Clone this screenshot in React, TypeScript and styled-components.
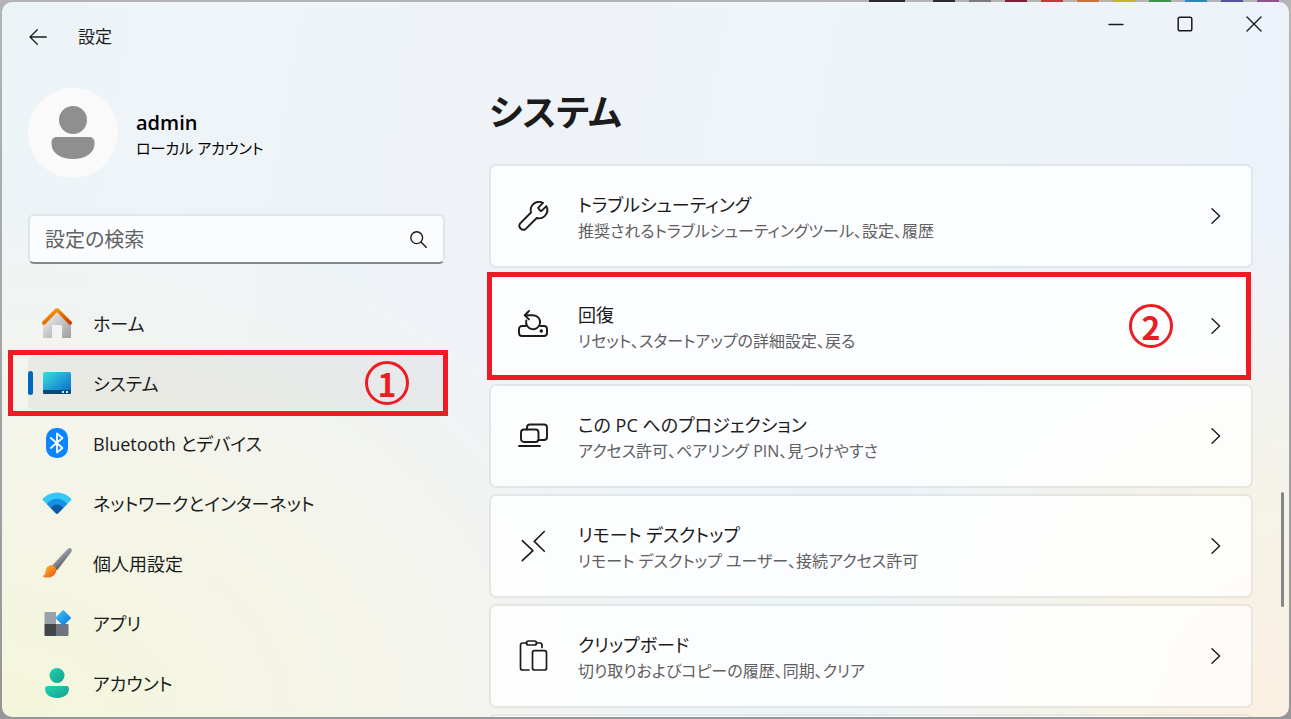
import React from "react";
import styled, { createGlobalStyle } from "styled-components";

const GlobalStyle = createGlobalStyle`
  * { box-sizing: border-box; }
  body {
    margin: 0;
    background: #a8a8aa;
    color: #1b1b1b;
    font-family: "Open Sans", "Noto Sans CJK JP", sans-serif;
    font-feature-settings: "palt";
  }
  button, input { font: inherit; font-feature-settings: inherit; color: inherit; }
  button { border: 0; padding: 0; background: none; }
  h1, h2, p, ul { margin: 0; padding: 0; }
  ul { list-style: none; }
`;

const Desktop = styled.div`
  height: 100vh;
  display: flex;
  flex-direction: column;
  padding: 0 2px 2px;
  background: linear-gradient(#b4b4b4, #a5a5a8 50%, #969698);
`;

const Swatches = styled.div`
  height: 2px;
  flex: none;
  display: flex;
  justify-content: flex-end;
  gap: 14px;
  padding-right: 10px;
`;

const Swatch = styled.span<{ $color: string }>`
  width: 22px;
  background: ${(p) => p.$color};
`;

const CurrentSwatch = styled(Swatch)`
  width: 36px;
  margin-right: 14px;
`;

const Window = styled.div`
  position: relative;
  flex: 1;
  min-height: 0;
  display: flex;
  flex-direction: column;
  overflow: hidden;
  border-radius: 10px;
  background:
    radial-gradient(ellipse 54% 72% at 0% 100%, #f4f6da, rgba(245, 244, 232, 0.85) 55%, rgba(243, 244, 242, 0) 100%),
    radial-gradient(ellipse 34% 68% at 100% 100%, #fbf0e2, rgba(246, 243, 230, 0.9) 45%, rgba(240, 244, 244, 0) 100%),
    linear-gradient(100deg, #edf4f7, #eff3f8 40%, #edf4f7 65%, #edf2fb);
`;

const TitleBar = styled.header`
  flex: none;
  height: 70px;
  display: flex;
  align-items: flex-start;
  justify-content: space-between;
`;

const TitleGroup = styled.div`
  display: flex;
  align-items: center;
  gap: 23px;
  height: 70px;
  padding-left: 19px;
  font-size: 17px;
  line-height: 24px;
`;

const BackButton = styled.button`
  width: 34px;
  height: 34px;
  display: grid;
  place-items: center;
`;

const WindowButtons = styled.div`
  display: flex;
  padding-right: 1px;
`;

const WindowButton = styled.button`
  width: 69px;
  height: 44px;
  display: grid;
  place-items: center;
`;

const Body = styled.div`
  flex: 1;
  min-height: 0;
  display: flex;
  gap: 44px;
  padding: 0 36px 0 26px;
`;

const Sidebar = styled.aside`
  flex: none;
  width: 417px;
  padding-top: 16px;
`;

const Profile = styled.div`
  display: flex;
  align-items: center;
  gap: 18px;
  height: 90px;
  margin-bottom: 36px;
`;

const ProfileText = styled.div`
  padding-top: 4px;
`;

const UserName = styled.h2`
  font-size: 20px;
  line-height: 26px;
  font-weight: 600;
  color: #000;
`;

const AccountType = styled.p`
  font-size: 15px;
  line-height: 24px;
  color: #000;
`;

const SearchBox = styled.label`
  display: flex;
  align-items: center;
  height: 50px;
  margin-bottom: 32px;
  padding: 0 16px 0 15px;
  border: 2px solid #e0e5ea;
  border-bottom-color: #868789;
  border-radius: 6px;
  background: #fbfcfe;
`;

const SearchInput = styled.input`
  flex: 1;
  min-width: 0;
  border: 0;
  outline: 0;
  padding: 0;
  background: none;
  font-size: 20px;
  &::placeholder { color: #616264; opacity: 1; }
`;

const NavList = styled.ul`
  display: flex;
  flex-direction: column;
  gap: 6px;
`;

const Item = styled.li`
  position: relative;
`;

const NavLink = styled.a<{ $active?: boolean }>`
  display: flex;
  align-items: center;
  height: 54px;
  border-radius: 6px;
  color: inherit;
  text-decoration: none;
  font-size: 18px;
  background: ${(p) => (p.$active ? "rgba(0, 0, 0, 0.04)" : "transparent")};
  &::before {
    content: "";
    width: 5px;
    height: 24px;
    border-radius: 3px;
    background: ${(p) => (p.$active ? "#0067c0" : "transparent")};
  }
`;

const NavIcon = styled.span`
  width: 48px;
  margin-right: 12px;
  display: grid;
  place-items: center;
`;

const Main = styled.main`
  flex: 1;
  min-width: 0;
`;

const PageTitle = styled.h1`
  height: 92px;
  padding-top: 14px;
  font-size: 36px;
  line-height: 54px;
  font-weight: 700;
`;

const CardList = styled.ul`
  display: flex;
  flex-direction: column;
  gap: 6px;
`;

const Card = styled.button`
  width: 100%;
  height: 104px;
  display: flex;
  align-items: center;
  padding: 0 30px 0 27px;
  border: 2px solid rgba(0, 0, 0, 0.05);
  border-radius: 7px;
  background: rgba(255, 255, 255, 0.8);
  background-clip: padding-box;
  text-align: left;
`;

const CardIcon = styled.span`
  width: 30px;
  height: 30px;
  margin-right: 30px;
`;

const CardText = styled.span`
  flex: 1;
  display: flex;
  flex-direction: column;
  padding-top: 4px;
`;

const CardTitle = styled.span`
  font-size: 18px;
  line-height: 26px;
`;

const CardNote = styled.span`
  font-size: 16px;
  line-height: 26px;
  color: #5f6062;
`;

const Highlight = styled.div<{ $inset: string; $pad: number }>`
  position: absolute;
  inset: ${(p) => p.$inset};
  z-index: 1;
  display: flex;
  align-items: center;
  justify-content: flex-end;
  padding-right: ${(p) => p.$pad}px;
  border: 5px solid #ed1c24;
  pointer-events: none;
`;

const StepNumber = styled.span`
  width: 44px;
  height: 44px;
  display: grid;
  place-items: center;
  border: 3px solid #ed1c24;
  border-radius: 50%;
  color: #ed1c24;
  font-family: "Noto Sans CJK JP", sans-serif;
  font-size: 32px;
  line-height: 36px;
  font-weight: 700;
`;

const ScrollThumb = styled.div`
  position: absolute;
  top: 490px;
  right: 5px;
  width: 3px;
  height: 115px;
  border-radius: 2px;
  background: #868783;
`;

const lineProps = {
  fill: "none",
  stroke: "#1b1b1b",
  strokeLinecap: "round" as const,
  strokeLinejoin: "round" as const,
};

const BackArrow = () => (
  <svg width="18" height="16" viewBox="0 0 18 16" {...lineProps} strokeWidth="1.3">
    <path d="M17.3 8H1M8.3.8 1 8l7.3 7.2" />
  </svg>
);

const SearchIcon = () => (
  <svg width="17" height="17" viewBox="0 0 17 17" {...lineProps} strokeWidth="1.4">
    <circle cx="6.7" cy="6.7" r="5.9" />
    <path d="m11 11 5.2 5.2" />
  </svg>
);

const Chevron = () => (
  <svg width="10" height="16" viewBox="0 0 10 16" {...lineProps} strokeWidth="1.4">
    <path d="m1 .8 7.6 7.2L1 15.2" />
  </svg>
);

const Avatar = () => (
  <svg width="90" height="90" viewBox="0 0 90 90">
    <circle cx="45" cy="45" r="45" fill="#fafafa" />
    <circle cx="45" cy="32" r="14" fill="#8f8f8f" />
    <path d="M28.5 49h33a5 5 0 0 1 5 5v2c0 9-9.5 15-21.5 15s-21.5-6-21.5-15v-2a5 5 0 0 1 5-5Z" fill="#8f8f8f" />
  </svg>
);

const HomeIcon = () => (
  <svg width="30" height="30" viewBox="0 0 30 30">
    <defs>
      <linearGradient id="homeWall" x1="0" y1="0" x2="1" y2="1">
        <stop offset="0.2" stopColor="#e4e4e4" />
        <stop offset="1" stopColor="#9c9c9c" />
      </linearGradient>
      <linearGradient id="homeRoof" x1="0" y1="0" x2="1" y2="1">
        <stop offset="0" stopColor="#ffa800" />
        <stop offset="1" stopColor="#cb3d00" />
      </linearGradient>
    </defs>
    <path d="M15 3.5 29 16v13a1 1 0 0 1-1 1h-8V18a1 1 0 0 0-1-1h-8a1 1 0 0 0-1 1v12H2a1 1 0 0 1-1-1V16Z" fill="url(#homeWall)" />
    <path d="M1.9 14.9 13.6 3a2 2 0 0 1 2.8 0l11.7 11.9" fill="none" stroke="url(#homeRoof)" strokeWidth="3.7" strokeLinecap="round" />
  </svg>
);

const SystemIcon = () => (
  <svg width="28" height="22" viewBox="0 0 28 22">
    <defs>
      <linearGradient id="screen" x1="0" y1="0" x2="1" y2="1">
        <stop offset="0" stopColor="#37e0e0" />
        <stop offset="1" stopColor="#0a64c8" />
      </linearGradient>
    </defs>
    <rect width="28" height="22" rx="1.6" fill="url(#screen)" />
    <path d="M0 18h28v2.400a1.600 1.600 0 0 1-1.600 1.600H1.600A1.600 1.600 0 0 1 0 20.400Z" fill="#0b4a70" />
    <path d="M19 19h2v2h-2zM23 19h2v2h-2z" fill="#d6eef8" />
  </svg>
);

const BluetoothIcon = () => (
  <svg width="22" height="30" viewBox="0 0 22 30">
    <rect width="22" height="30" rx="10" fill="#0a84ff" />
    <path d="m4.8 10 11.700 10L11 24.500v-19l5.500 4.500L4.800 20" fill="none" stroke="#fff" strokeWidth="1.8" strokeLinejoin="round" strokeLinecap="round" />
  </svg>
);

const NetworkIcon = () => (
  <svg width="30" height="22" viewBox="0 0 30 22">
    <path d="M.9 6.4C8.5-1.6 21.5-1.6 29.100 6.400c.5.500.5 1 .1 1.500L15.900 21.400a1.300 1.300 0 0 1-1.800 0L.8 7.900c-.4-.5-.4-1 .1-1.500Z" fill="#35c8f7" />
    <path d="M4.700 11.900c5.600-7 15-7 20.600 0l-9.400 9.500a1.300 1.300 0 0 1-1.800 0Z" fill="#1591e6" />
    <path d="M8.800 16c3.400-4.800 9-4.800 12.400 0l-5.300 5.400a1.300 1.300 0 0 1-1.800 0Z" fill="#0c59a4" />
  </svg>
);

const BrushIcon = () => (
  <svg width="30" height="30" viewBox="0 0 30 30">
    <defs>
      <linearGradient id="handle" x1="0.4" y1="0.2" x2="0.7" y2="0.6">
        <stop offset="0" stopColor="#b0b5ba" />
        <stop offset="1" stopColor="#5f656c" />
      </linearGradient>
      <linearGradient id="bristle" x1="0" y1="0" x2="1" y2="1">
        <stop offset="0" stopColor="#ffc024" />
        <stop offset="1" stopColor="#e8501c" />
      </linearGradient>
    </defs>
    <path d="M10 17.500 25.300 1.200c1.200-1.200 3-1.400 3.800-.6.800.9.700 2.400-.1 3.700L15 22.500Z" fill="url(#handle)" />
    <path d="M9.500 17.200c3.200.2 5 2.500 4.700 5.600C13.700 27.600 9 29.800 5 29.600c-2 0-3.700-.6-4.600-1.600 2.600-.8 2.900-2.700 3.300-5.100.5-3.600 2.600-5.900 5.800-5.700Z" fill="url(#bristle)" />
  </svg>
);

const AppsIcon = () => (
  <svg width="27" height="26" viewBox="0 0 27 26">
    <defs>
      <linearGradient id="tile" x1="0" y1="0" x2="1" y2="1">
        <stop offset="0" stopColor="#3fc9fb" />
        <stop offset="1" stopColor="#0b71d8" />
      </linearGradient>
    </defs>
    <path d="M1.500 2H12v12H.5V3a1 1 0 0 1 1-1Z" fill="#9ba1aa" />
    <path d="M.5 14H12v12H1.500a1 1 0 0 1-1-1Z" fill="#414549" />
    <path d="M12 14h11.500a1 1 0 0 1 1 1v10a1 1 0 0 1-1 1H12Z" fill="#6f757e" />
    <path d="M18.500.5a1 1 0 0 1 1.400 0l6.700 6.700a1 1 0 0 1 0 1.400l-6.700 6.700a1 1 0 0 1-1.400 0l-6.700-6.700a1 1 0 0 1 0-1.400Z" fill="url(#tile)" />
  </svg>
);

const AccountIcon = () => (
  <svg width="24" height="30" viewBox="0 0 24 30">
    <defs>
      <linearGradient id="person" x1="0" y1="0" x2="1" y2="1">
        <stop offset="0" stopColor="#24d2b4" />
        <stop offset="1" stopColor="#13a089" />
      </linearGradient>
    </defs>
    <circle cx="12" cy="7.5" r="7.5" fill="url(#person)" />
    <path d="M2.500 18h19A2.500 2.500 0 0 1 24 20.500c0 6-5 9.500-12 9.500S0 26.500 0 20.500A2.500 2.500 0 0 1 2.500 18Z" fill="url(#person)" />
  </svg>
);

const LineIcon = ({ children }: { children: React.ReactNode }) => (
  <svg width="30" height="30" viewBox="0 0 30 30" overflow="visible" {...lineProps} strokeWidth="1.9">
    {children}
  </svg>
);

const WrenchIcon = () => (
  <LineIcon>
    <path d="M25 1.900C21.500.2 17.300.8 14.800 3.600c-2 2.300-2.600 5-1.800 7.900L2.200 22.300a4 4 0 0 0 5.600 5.600L18.700 17c2.900.8 5.800.2 8-1.900 2.600-2.600 3.300-6.600 1.700-9.900l-4.500 4.500a1 1 0 0 1-1.400 0l-2-2a1 1 0 0 1 0-1.400Z" />
  </LineIcon>
);

const RecoveryIcon = () => (
  <LineIcon>
    <path d="M11 0 6.700 4.200 11 8.400M6.700 4.200H15a7 7 0 1 1-6.700 5.200M7.500 15H4a3 3 0 0 0-3 3v4a3 3 0 0 0 3 3h22a3 3 0 0 0 3-3v-4a3 3 0 0 0-3-3h-3.500" />
    <circle cx="23.3" cy="20" r="0.8" fill="#1b1b1b" />
  </LineIcon>
);

const ProjectIcon = () => (
  <LineIcon>
    <path d="M9 8.500V6.500a3 3 0 0 1 3-3h14a3 3 0 0 1 3 3V16a3 3 0 0 1-3 3h-5.500M1 25h21" />
    <rect x="3" y="8.5" width="17.5" height="12.5" rx="3" />
  </LineIcon>
);

const RemoteIcon = () => (
  <LineIcon>
    <path d="m4.300 9.700 10.600 10-10.600 10M26.300.5l-10 9.900 10 9.900" strokeWidth="1.6" />
  </LineIcon>
);

const ClipboardIcon = () => (
  <LineIcon>
    <path d="M8.500 2h-4a2 2 0 0 0-2 2v23a2 2 0 0 0 2 2H11M18.500 2H22a2 2 0 0 1 2 2v2.500" strokeWidth="1.7" />
    <rect x="8.5" y="0" width="10" height="4" rx="2" strokeWidth="1.7" />
    <rect x="14.5" y="9.7" width="14" height="19.300" rx="2" strokeWidth="1.7" />
  </LineIcon>
);

const swatches = ["#2b2b2b", "#7c7c7c", "#7d2236", "#c63a40", "#c7733f", "#c1b32c", "#3f9450", "#3089b0", "#5252a0", "#8b528f"];

const navItems = [
  { label: "ホーム", icon: <HomeIcon /> },
  { label: "システム", icon: <SystemIcon />, step: "1" },
  { label: "Bluetooth とデバイス", icon: <BluetoothIcon /> },
  { label: "ネットワークとインターネット", icon: <NetworkIcon /> },
  { label: "個人用設定", icon: <BrushIcon /> },
  { label: "アプリ", icon: <AppsIcon /> },
  { label: "アカウント", icon: <AccountIcon /> },
];

const cards = [
  { title: "トラブルシューティング", note: "推奨されるトラブルシューティングツール、設定、履歴", icon: <WrenchIcon /> },
  { title: "回復", note: "リセット、スタートアップの詳細設定、戻る", icon: <RecoveryIcon />, step: "2" },
  { title: "この PC へのプロジェクション", note: "アクセス許可、ペアリング PIN、見つけやすさ", icon: <ProjectIcon /> },
  { title: "リモート デスクトップ", note: "リモート デスクトップ ユーザー、接続アクセス許可", icon: <RemoteIcon /> },
  { title: "クリップボード", note: "切り取りおよびコピーの履歴、同期、クリア", icon: <ClipboardIcon /> },
];

export default function App() {
  return (
    <Desktop lang="ja">
      <GlobalStyle />
      <Swatches>
        <CurrentSwatch $color="#2b2b2b" />
        {swatches.map((c) => (
          <Swatch key={c} $color={c} />
        ))}
      </Swatches>
      <Window>
        <TitleBar>
          <TitleGroup>
            <BackButton aria-label="戻る">
              <BackArrow />
            </BackButton>
            <span>設定</span>
          </TitleGroup>
          <WindowButtons>
            <WindowButton aria-label="最小化">
              <svg width="16" height="16" viewBox="0 0 16 16" {...lineProps} strokeWidth="1.4">
                <path d="M1 8.500h14" />
              </svg>
            </WindowButton>
            <WindowButton aria-label="最大化">
              <svg width="16" height="16" viewBox="0 0 16 16" {...lineProps} strokeWidth="1.5">
                <rect x="1.2" y="1.2" width="13.6" height="13.6" rx="1.8" />
              </svg>
            </WindowButton>
            <WindowButton aria-label="閉じる">
              <svg width="16" height="16" viewBox="0 0 16 16" {...lineProps} strokeWidth="1.4">
                <path d="m1 1 14 14M15 1 1 15" />
              </svg>
            </WindowButton>
          </WindowButtons>
        </TitleBar>
        <Body>
          <Sidebar>
            <Profile>
              <Avatar />
              <ProfileText>
                <UserName>admin</UserName>
                <AccountType>ローカル アカウント</AccountType>
              </ProfileText>
            </Profile>
            <SearchBox>
              <SearchInput type="text" aria-label="設定の検索" placeholder="設定の検索" />
              <SearchIcon />
            </SearchBox>
            <nav>
              <NavList>
                {navItems.map((n) => (
                  <Item key={n.label}>
                    <NavLink href="#" $active={!!n.step}>
                      <NavIcon>{n.icon}</NavIcon>
                      {n.label}
                    </NavLink>
                    {n.step && (
                      <Highlight $inset="-6px -3px -6px -20px" $pad={34}>
                        <StepNumber>{n.step}</StepNumber>
                      </Highlight>
                    )}
                  </Item>
                ))}
              </NavList>
            </nav>
          </Sidebar>
          <Main>
            <PageTitle>システム</PageTitle>
            <CardList>
              {cards.map((c) => (
                <Item key={c.title}>
                  <Card>
                    <CardIcon>{c.icon}</CardIcon>
                    <CardText>
                      <CardTitle>{c.title}</CardTitle>
                      <CardNote>{c.note}</CardNote>
                    </CardText>
                    <Chevron />
                  </Card>
                  {c.step && (
                    <Highlight $inset="-2px 2px -2px -2px" $pad={73}>
                      <StepNumber>{c.step}</StepNumber>
                    </Highlight>
                  )}
                </Item>
              ))}
              <Item>
                <Card aria-label="バージョン情報" />
              </Item>
            </CardList>
          </Main>
        </Body>
        <ScrollThumb />
      </Window>
    </Desktop>
  );
}
